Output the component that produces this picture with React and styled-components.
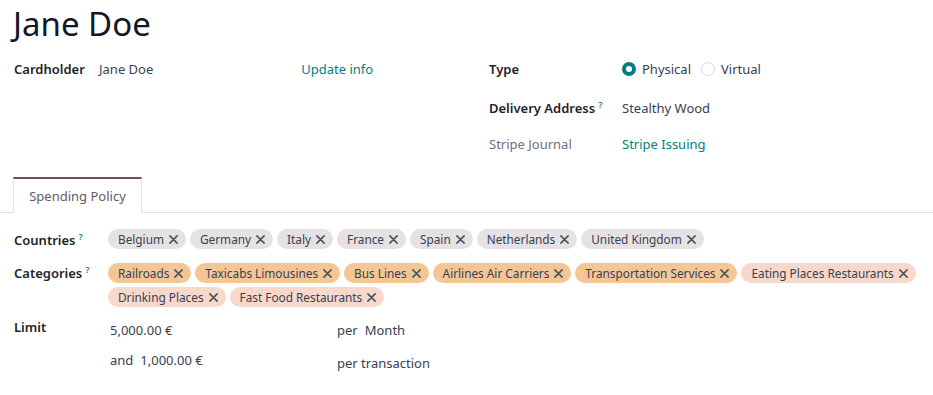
import React from 'react';
import styled, { createGlobalStyle } from 'styled-components';

const GlobalStyle = createGlobalStyle`
  body {
    margin: 0;
    background: #fff;
    font-family: "Noto Sans", "Open Sans", sans-serif;
    font-size: 13px;
    color: #374151;
  }
`;

const Sheet = styled.div`
  width: 933px;
  height: 395px;
  overflow: hidden;
  background: #fff;
`;

const Title = styled.h1`
  margin: 0;
  padding: 2px 0 0 13px;
  height: 46px;
  font-size: 33px;
  font-weight: 400;
  line-height: 44px;
  color: #111827;
`;

const Header = styled.div`
  display: grid;
  grid-template-columns: 475px 1fr;
  padding: 1px 14px 0;
`;

const Group = styled.div`
  display: flex;
  flex-direction: column;
`;

const FieldRow = styled.div`
  display: grid;
  grid-template-columns: ${p => p.$label} 1fr;
  align-items: center;
  height: ${p => p.$h};
`;

const Label = styled.div`
  font-weight: ${p => (p.$muted ? 400 : 600)};
  color: ${p => (p.$muted ? '#6b7280' : '#1f2329')};
`;

const Help = styled.sup`
  color: #017e84;
  font-size: 9px;
  font-weight: 600;
  margin-left: 3px;
`;

const Value = styled.div`
  display: flex;
  align-items: center;
  color: #374151;
`;

const Link = styled.span`
  color: #017e84;
  margin-left: ${p => p.$offset || 0};
`;

const RadioGroup = styled.div`
  display: flex;
  align-items: center;
  gap: 6px;
`;

const RadioDot = styled.span`
  width: 14px;
  height: 14px;
  border-radius: 50%;
  box-sizing: border-box;
  border: ${p => (p.$on ? '4px solid #017e84' : '1px solid #d8dadd')};
  background: #fff;
  flex: none;
`;

const RadioText = styled.span`
  margin-right: 4px;
`;

const TabBar = styled.div`
  display: flex;
  margin-top: 16px;
  padding-left: 13px;
  border-bottom: 1px solid #dee2e6;
`;

const Tab = styled.div`
  width: 127px;
  height: 34px;
  display: flex;
  align-items: center;
  justify-content: center;
  border: 1px solid #dee2e6;
  border-top: 2px solid #714b67;
  border-bottom: none;
  margin-bottom: -1px;
  background: #fff;
  color: #66596a;
  font-size: 13px;
`;

const Policy = styled.div`
  padding: 16px 4px 0 14px;
  display: flex;
  flex-direction: column;
`;

const PolicyRow = styled.div`
  display: grid;
  grid-template-columns: 94px 1fr;
  align-items: start;
  margin-bottom: ${p => p.$mb || '0'};
`;

const PolicyLabel = styled.div`
  font-weight: 600;
  color: #1f2329;
  padding-top: ${p => p.$pt || '1px'};
`;

const Tags = styled.div`
  display: flex;
  flex-wrap: wrap;
  gap: 4px;
`;

const Tag = styled.span`
  display: inline-flex;
  align-items: center;
  gap: 5px;
  height: 20px;
  padding: 0 8px 0 10px;
  border-radius: 10px;
  background: ${p => p.$bg};
  color: #374151;
  font-size: 11.8px;
  white-space: nowrap;
`;

const Close = styled.svg`
  width: 9px;
  height: 9px;
  stroke: #4b5563;
  stroke-width: 1.8;
  stroke-linecap: round;
`;

const LimitGrid = styled.div`
  display: grid;
  grid-template-columns: 227px 1fr;
  grid-template-rows: 25px 36px;
  padding-left: 2px;
`;

const LimitCell = styled.div`
  display: flex;
  align-items: center;
  gap: 7px;
  padding-top: ${p => p.$pt || '0'};
`;

const tagColors = {
  grey: '#e6e1e2',
  orange: '#f5c695',
  pink: '#f8d8cb',
};

const countries = ['Belgium', 'Germany', 'Italy', 'France', 'Spain', 'Netherlands', 'United Kingdom'];

const categories = [
  ['Railroads', 'orange'],
  ['Taxicabs Limousines', 'orange'],
  ['Bus Lines', 'orange'],
  ['Airlines Air Carriers', 'orange'],
  ['Transportation Services', 'orange'],
  ['Eating Places Restaurants', 'pink'],
  ['Drinking Places', 'pink'],
  ['Fast Food Restaurants', 'pink'],
];

const X = () => (
  <Close viewBox="0 0 10 10" fill="none">
    <path d="M1 1L9 9M9 1L1 9" />
  </Close>
);

const App = () => {
  return (
    <Sheet>
      <GlobalStyle />
      <Title>Jane Doe</Title>
      <Header>
        <Group>
          <FieldRow $label="85px" $h="40px">
            <Label>Cardholder</Label>
            <Value>
              Jane Doe
              <Link $offset="148px">Update info</Link>
            </Value>
          </FieldRow>
        </Group>
        <Group>
          <FieldRow $label="133px" $h="40px">
            <Label>Type</Label>
            <RadioGroup>
              <RadioDot $on />
              <RadioText>Physical</RadioText>
              <RadioDot />
              <RadioText>Virtual</RadioText>
            </RadioGroup>
          </FieldRow>
          <FieldRow $label="133px" $h="38px">
            <Label>Delivery Address<Help>?</Help></Label>
            <Value>Stealthy Wood</Value>
          </FieldRow>
          <FieldRow $label="133px" $h="34px">
            <Label $muted>Stripe Journal</Label>
            <Link>Stripe Issuing</Link>
          </FieldRow>
        </Group>
      </Header>
      <TabBar>
        <Tab>Spending Policy</Tab>
      </TabBar>
      <Policy>
        <PolicyRow $mb="14px">
          <PolicyLabel>Countries<Help>?</Help></PolicyLabel>
          <Tags>
            {countries.map(c => (
              <Tag key={c} $bg={tagColors.grey}>{c}<X /></Tag>
            ))}
          </Tags>
        </PolicyRow>
        <PolicyRow $mb="10px">
          <PolicyLabel $pt="0">Categories<Help>?</Help></PolicyLabel>
          <Tags>
            {categories.map(([name, color]) => (
              <Tag key={name} $bg={tagColors[color]}>{name}<X /></Tag>
            ))}
          </Tags>
        </PolicyRow>
        <PolicyRow>
          <PolicyLabel $pt="1px">Limit</PolicyLabel>
          <LimitGrid>
            <LimitCell>5,000.00 €</LimitCell>
            <LimitCell>per <span>Month</span></LimitCell>
            <LimitCell>and <span>1,000.00 €</span></LimitCell>
            <LimitCell $pt="6px">per transaction</LimitCell>
          </LimitGrid>
        </PolicyRow>
      </Policy>
    </Sheet>
  );
};

export default App;
